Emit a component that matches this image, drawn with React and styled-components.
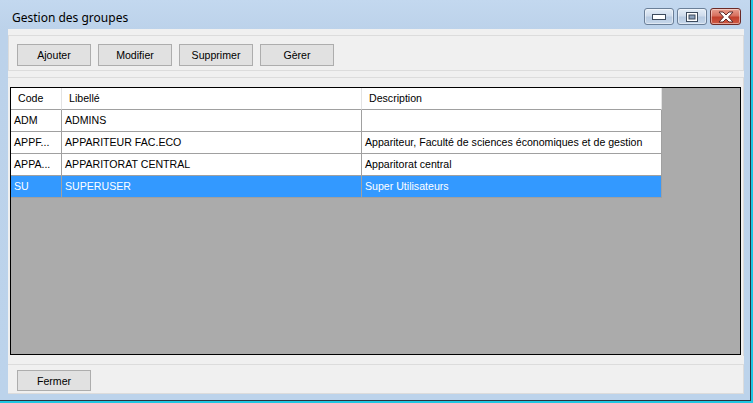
import React from 'react';
import styled, { createGlobalStyle } from 'styled-components';

const GlobalStyle = createGlobalStyle`
  html, body {
    margin: 0;
    padding: 0;
    background: #22c6e2;
    width: 753px;
    height: 403px;
    overflow: hidden;
  }
`;

const Frame = styled('div')({
  width: '750px',
  height: '400px',
  background: 'linear-gradient(180deg, #c3d8ef 0px, #bcd2ea 30px, #bcd3eb 100%)',
  borderRight: '1px solid #2a3440',
  borderBottom: '1px solid #2a3440',
  display: 'flex',
  flexDirection: 'column',
  fontFamily: '"Liberation Sans", Arial, sans-serif',
});

const TitleBar = styled('div')({
  height: '29px',
  display: 'flex',
  alignItems: 'flex-start',
  padding: '0 9px 0 12px',
});

const Title = styled('div')({
  fontFamily: '"Noto Sans", "Open Sans", sans-serif',
  fontSize: '12px',
  color: '#000',
  marginTop: '9px',
  flex: 1,
});

const CaptionButtons = styled('div')({
  display: 'flex',
  gap: '3px',
  marginTop: '8px',
});

const CaptionButton = styled('div')`
  width: ${(p) => (p.$close ? '31px' : '30px')};
  height: 17px;
  box-sizing: border-box;
  border: 1px solid ${(p) => (p.$close ? '#6b2a26' : '#6a7f98')};
  border-radius: 3px;
  background: ${(p) =>
    p.$close
      ? 'linear-gradient(180deg, #e8a090 0%, #d8705e 45%, #c2402c 55%, #cf5a44 100%)'
      : 'linear-gradient(180deg, #e4edf7 0%, #cfdcec 45%, #b8cbe2 55%, #c6d7ea 100%)'};
  display: flex;
  align-items: center;
  justify-content: center;
  box-shadow: inset 0 0 0 1px rgba(255, 255, 255, 0.45);
`;

const Client = styled('div')({
  margin: '0 6px 0 8px',
  height: '365px',
  background: '#f0f0f0',
  display: 'flex',
  flexDirection: 'column',
  paddingTop: '6px',
  boxSizing: 'border-box',
});

const ToolBar = styled('div')({
  height: '36px',
  boxSizing: 'border-box',
  border: '1px solid #dcdcdc',
  display: 'flex',
  gap: '7px',
  padding: '8px 0 0 8px',
  alignItems: 'flex-start',
});

const Button = styled('div')`
  width: ${(p) => p.$w || 74}px;
  height: ${(p) => p.$h || 22}px;
  box-sizing: border-box;
  background: #e1e1e1;
  border: 1px solid #adadad;
  font-size: 10.6px;
  color: #000;
  display: flex;
  align-items: center;
  justify-content: center;
`;

const GridPanel = styled('div')({
  marginTop: '6px',
  borderTop: '1px solid #dcdcdc',
  borderRight: '1px solid #dcdcdc',
  padding: '9px 2px 0 2px',
  height: '285px',
  boxSizing: 'border-box',
});

const Grid = styled('div')({
  width: '731px',
  height: '268px',
  boxSizing: 'border-box',
  border: '1px solid #000',
  background: '#ababab',
  overflow: 'hidden',
});

const Row = styled('div')`
  display: flex;
  height: 22px;
  width: 651px;
`;

const Cell = styled('div')`
  width: ${(p) => p.$w}px;
  box-sizing: border-box;
  flex-shrink: 0;
  background: ${(p) => (p.$selected ? '#3399ff' : '#fff')};
  color: ${(p) => (p.$selected ? '#fff' : '#000')};
  border-right: 1px solid ${(p) => (p.$header ? '#e3e3e3' : '#a0a0a0')};
  border-bottom: 1px solid #a0a0a0;
  font-size: 10.6px;
  line-height: 21px;
  padding-left: ${(p) => (p.$header ? '7px' : '3px')};
  white-space: nowrap;
  overflow: hidden;
`;

const BottomPanel = styled('div')({
  marginTop: '8px',
  borderTop: '1px solid #dcdcdc',
  borderBottom: '1px solid #dcdcdc',
  borderRight: '1px solid #dcdcdc',
  height: '30px',
  boxSizing: 'border-box',
  padding: '5px 0 0 9px',
});

const columns = [
  { key: 'code', label: 'Code', width: 51 },
  { key: 'label', label: 'Libellé', width: 300 },
  { key: 'desc', label: 'Description', width: 300 },
];

const groups = [
  { code: 'ADM', label: 'ADMINS', desc: '' },
  { code: 'APPF...', label: 'APPARITEUR FAC.ECO', desc: 'Appariteur, Faculté de sciences économiques et de gestion' },
  { code: 'APPA...', label: 'APPARITORAT CENTRAL', desc: 'Apparitorat central' },
  { code: 'SU', label: 'SUPERUSER', desc: 'Super Utilisateurs', selected: true },
];

const MinIcon = () => (
  <svg width="14" height="6" viewBox="0 0 14 6">
    <rect x="0.5" y="0.5" width="13" height="5" fill="#fff" stroke="#3c4a5c" />
  </svg>
);

const MaxIcon = () => (
  <svg width="12" height="10" viewBox="0 0 12 10">
    <rect x="0.5" y="0.5" width="11" height="9" fill="#fff" stroke="#3c4a5c" />
    <rect x="3" y="3" width="6" height="4" fill="#8aa0bb" stroke="#3c4a5c" strokeWidth="1" />
  </svg>
);

const CloseIcon = () => (
  <svg width="16" height="12" viewBox="0 0 16 12">
    <path
      d="M1 1 H5 L8 4 L11 1 H15 L10.5 6 L15 11 H11 L8 8 L5 11 H1 L5.5 6 Z"
      fill="#fff"
      stroke="#5b2b2b"
      strokeWidth="1"
      strokeLinejoin="round"
    />
  </svg>
);

export default function App() {
  return (
    <>
      <GlobalStyle />
      <Frame>
        <TitleBar>
          <Title>Gestion des groupes</Title>
          <CaptionButtons>
            <CaptionButton><MinIcon /></CaptionButton>
            <CaptionButton><MaxIcon /></CaptionButton>
            <CaptionButton $close><CloseIcon /></CaptionButton>
          </CaptionButtons>
        </TitleBar>
        <Client>
          <ToolBar>
            <Button>Ajouter</Button>
            <Button>Modifier</Button>
            <Button>Supprimer</Button>
            <Button>Gèrer</Button>
          </ToolBar>
          <GridPanel>
            <Grid>
              <Row>
                {columns.map((c) => (
                  <Cell key={c.key} $w={c.width} $header>{c.label}</Cell>
                ))}
              </Row>
              {groups.map((g) => (
                <Row key={g.code}>
                  {columns.map((c) => (
                    <Cell key={c.key} $w={c.width} $selected={g.selected}>{g[c.key]}</Cell>
                  ))}
                </Row>
              ))}
            </Grid>
          </GridPanel>
          <BottomPanel>
            <Button $h={21}>Fermer</Button>
          </BottomPanel>
        </Client>
      </Frame>
    </>
  );
}
